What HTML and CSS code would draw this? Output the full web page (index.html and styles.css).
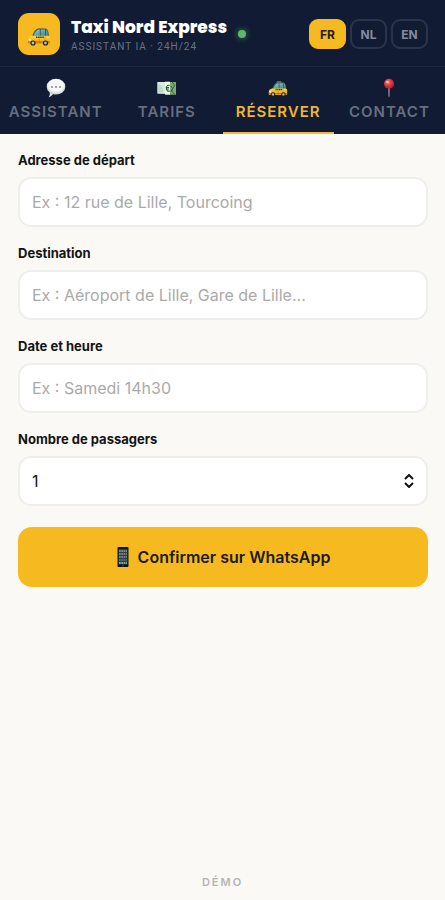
FILE: index.html
```html
<!DOCTYPE html>
<html lang="fr">
<head>
<meta charset="utf-8">
<meta name="viewport" content="width=device-width, initial-scale=1">
<title>Taxi Nord Express</title>
<link rel="stylesheet" href="styles.css">
</head>
<body>
<svg class="defs" aria-hidden="true">
  <defs>
    <linearGradient id="body-paint" x1="0" y1="0" x2="0" y2="1">
      <stop offset="0" stop-color="#ffd83d"/><stop offset="1" stop-color="#e79a12"/>
    </linearGradient>
    <linearGradient id="glass" x1="0" y1="0" x2="1" y2="1">
      <stop offset="0" stop-color="#8ccbd0"/><stop offset="1" stop-color="#3b7f8e"/>
    </linearGradient>
    <radialGradient id="bubble" cx=".5" cy=".4" r=".6">
      <stop offset=".6" stop-color="#fafafa"/><stop offset="1" stop-color="#c9cbd0"/>
    </radialGradient>
    <radialGradient id="pin" cx=".4" cy=".35" r=".65">
      <stop offset="0" stop-color="#ff8d8d"/><stop offset=".45" stop-color="#e23b42"/><stop offset="1" stop-color="#b51e2c"/>
    </radialGradient>
    <symbol id="taxi" viewBox="0 0 24 19">
      <path d="M10 2q.3-1.500 1.500-1.500h3.500Q16.300.5 16.500 2z" fill="#e9b02c"/>
      <path d="M5 9.500Q7.500 2 11 1.500h7.500q3 0 3.500 8z" fill="#355f68"/>
      <path d="M6.500 9Q8.500 3 12 2.500h.8V9zM13.800 2.500h4.200V9h-4.200zM19 2.700q1.800.5 2.200 6.300H19z" fill="url(#glass)"/>
      <path d="M1 12.500Q1.300 9.500 5 8.800h16.500q1.500.5 1.500 3v3.700q0 1.300-1.300 1.300H1.800Q.7 16.500.7 15z" fill="url(#body-paint)"/>
      <path d="M9 10.200h8" stroke="#3d3010" stroke-width="1.500" stroke-dasharray="1.500 .6"/>
      <path d="M12.500 11.500v4.500M18 9v6" stroke="#bb7b0c" stroke-width=".5"/>
      <path d="M1 15h22" stroke="#875d13" stroke-width=".8"/>
      <circle cx="2.800" cy="12.800" r="1.100" fill="#fff6bd"/>
      <circle cx="6" cy="16" r="2.600" fill="#202329"/><circle cx="6" cy="16" r="1.400" fill="#b4bbc4"/>
      <circle cx="18.500" cy="16" r="2.600" fill="#202329"/><circle cx="18.500" cy="16" r="1.400" fill="#b4bbc4"/>
    </symbol>
  </defs>
</svg>
<div class="app">
  <header class="header">
    <div class="logo"><svg class="logo-icon" aria-hidden="true"><use href="#taxi"/></svg></div>
    <div class="brand">
      <h1 class="brand-name">Taxi Nord Express</h1>
      <p class="brand-sub">ASSISTANT IA · 24H/24</p>
    </div>
    <span class="status"></span>
    <div class="langs">
      <button type="button" class="lang lang-active">FR</button>
      <button type="button" class="lang">NL</button>
      <button type="button" class="lang">EN</button>
    </div>
  </header>
  <nav class="tabs">
    <button type="button" class="tab">
      <svg class="tab-icon" viewBox="0 0 20 20" aria-hidden="true"><path d="M4 12.500l8 3q-3 1-4.800.5-1.700 2.500-4.700 3.500 1.700-2.500 1.500-7z" fill="#d4d6da"/><ellipse cx="10" cy="8.700" rx="9.300" ry="7.900" fill="url(#bubble)"/><g fill="#333"><circle cx="6" cy="9" r=".8"/><circle cx="10" cy="9" r=".8"/><circle cx="14" cy="9" r=".8"/></g></svg>
      <span>ASSISTANT</span>
    </button>
    <button type="button" class="tab">
      <svg class="tab-icon" viewBox="0 0 20 20" aria-hidden="true"><path d="M.5 4h18.500v12.500L.5 15.500z" fill="#a8d2ae"/><path d="M.5 4H8v11.500H.5z" fill="#d8eadb"/><path d="M1.500 6q4 1 5 8.500h-5z" fill="#b9d9c2"/><path d="M8 3.700h5v13H8z" fill="#f3f8e9"/><path d="M13 4h6v12.500h-6z" fill="#78ac70"/><path d="M15 4q4 3 1 6t2 6.500M14 8q3 2 0 6" fill="none" stroke="#315f39" stroke-width=".9"/><path d="M12.800 7.500q-3.300-1-3.300 2.700t3.300 2.700M8.700 9.500h3.300M8.700 11h3.300" fill="none" stroke="#236a40" stroke-width="1.100"/></svg>
      <span>TARIFS</span>
    </button>
    <button type="button" class="tab tab-active">
      <svg class="tab-icon" viewBox="0 0 20 20" aria-hidden="true"><use href="#taxi" x="0" y="3" width="20" height="16"/></svg>
      <span>RÉSERVER</span>
    </button>
    <button type="button" class="tab">
      <svg class="tab-icon" viewBox="0 0 20 20" aria-hidden="true"><path d="M9.400 9h1.200l-.2 9.500h-.8z" fill="#b7a6ab" stroke="#8a7078" stroke-width=".4"/><circle cx="10" cy="5.800" r="5" fill="url(#pin)"/><ellipse cx="8.300" cy="4" rx="1.500" ry="1" fill="#ffc0bd"/></svg>
      <span>CONTACT</span>
    </button>
  </nav>
  <main class="main">
    <form class="form">
      <div class="field">
        <label class="label" for="from">Adresse de départ</label>
        <input class="control" id="from" type="text" placeholder="Ex : 12 rue de Lille, Tourcoing">
      </div>
      <div class="field">
        <label class="label" for="to">Destination</label>
        <input class="control" id="to" type="text" placeholder="Ex : Aéroport de Lille, Gare de Lille...">
      </div>
      <div class="field">
        <label class="label" for="when">Date et heure</label>
        <input class="control" id="when" type="text" placeholder="Ex : Samedi 14h30">
      </div>
      <div class="field">
        <label class="label" for="people">Nombre de passagers</label>
        <div class="select-wrap">
          <select class="control" id="people"><option>1</option><option>2</option><option>3</option><option>4</option></select>
          <svg class="chevrons" viewBox="0 0 10 14" aria-hidden="true"><path d="M1 5l4-4 4 4M1 9l4 4 4-4"/></svg>
        </div>
      </div>
      <button type="button" class="submit">
        <svg class="phone" viewBox="0 0 12 20" aria-hidden="true"><rect x=".5" width="11" height="20" rx="1" fill="#111417"/><rect x="1.500" y="2" width="9" height="15.500" fill="#29434a"/><g stroke-width="1.700" stroke-dasharray="1.700 .6"><path d="M2 4h8" stroke="#7fae9c"/><path d="M2 7h8" stroke="#a88e78"/><path d="M2 10h8" stroke="#7897a8"/><path d="M2 13h8" stroke="#617c6c"/><path d="M2 16h8" stroke="#93c9bb"/></g><circle cx="6" cy="18.700" r=".6" fill="#69716f"/></svg>
        <span>Confirmer sur WhatsApp</span>
      </button>
    </form>
  </main>
  <footer class="footer">DÉMO</footer>
</div>
</body>
</html>
```
FILE: styles.css
```css
* { box-sizing: border-box; }
body {
  margin: 0;
  background: #faf9f5;
  color: #141414;
  font-family: Inter, "Liberation Sans", sans-serif;
}
button, input, select { font: inherit; }
.defs { position: absolute; width: 0; height: 0; }
.app { display: flex; flex-direction: column; min-height: 100vh; }

.header {
  display: flex;
  align-items: center;
  padding: 13px 17px 11px 18px;
  background: #111b33;
}
.logo {
  display: flex;
  flex: none;
  align-items: center;
  justify-content: center;
  width: 42px;
  height: 42px;
  border-radius: 11px;
  background: #f6ba20;
}
.logo-icon { width: 24px; height: 19px; margin-top: 5px; }
.brand { padding-top: 2px; margin-left: 11px; white-space: nowrap; }
.brand-name {
  margin: 0;
  color: #fff;
  font-family: Poppins, Inter, sans-serif;
  font-size: 17px;
  font-weight: 800;
  line-height: 24px;
}
.brand-sub {
  margin: 0;
  color: #6a7284;
  font-family: Roboto, Inter, sans-serif;
  font-size: 10px;
  letter-spacing: 1px;
  line-height: 16px;
}
.status {
  flex: none;
  width: 8px;
  height: 8px;
  margin-left: 11px;
  border-radius: 50%;
  background: #62b56d;
  box-shadow: 0 0 6px #3e8d4e;
}
.langs { display: flex; gap: 4px; margin-left: auto; }
.lang {
  width: 37px;
  height: 30px;
  padding: 0;
  border: 2px solid #2b344a;
  border-radius: 9px;
  background: transparent;
  color: #848b9c;
  font-size: 12px;
  font-weight: 700;
}
.lang-active { border-color: #f6ba20; background: #f6ba20; color: #222018; }

.tabs {
  display: grid;
  grid-template-columns: repeat(4, 1fr);
  border-top: 1px solid #1d2840;
  background: #111b33;
}
.tab {
  display: flex;
  flex-direction: column;
  align-items: center;
  gap: 3px;
  padding: 11px 0 9px;
  border: 0;
  border-bottom: 2px solid transparent;
  background: transparent;
  color: #666e80;
  font-size: 15px;
  font-weight: 600;
  letter-spacing: 1px;
  line-height: 22px;
}
.tab-active { border-bottom-color: #f2b83f; color: #f2b62d; }
.tab-icon { width: 20px; height: 20px; }

.main { flex: 1; padding: 18px 17px 18px 18px; }
.form { display: flex; flex-direction: column; gap: 18px; }
.field { display: flex; flex-direction: column; gap: 9px; }
.label { font-size: 13px; font-weight: 700; line-height: 16px; }
.control {
  width: 100%;
  height: 50px;
  padding: 0 12px;
  border: 2px solid #eeeeed;
  border-radius: 13px;
  background: #fff;
  color: #141414;
  font-size: 16px;
  appearance: none;
}
.control::placeholder { color: #aaa; opacity: 1; }
.select-wrap { display: grid; align-items: center; }
.select-wrap > * { grid-area: 1 / 1; }
.chevrons {
  justify-self: end;
  width: 10px;
  height: 14px;
  margin-right: 14px;
  fill: none;
  stroke: #111;
  stroke-width: 2;
  pointer-events: none;
}
.submit {
  display: flex;
  align-items: center;
  justify-content: center;
  gap: 8px;
  height: 60px;
  margin-top: 3px;
  border: 0;
  border-radius: 14px;
  background: #f6ba20;
  color: #1c1a14;
  font-size: 16px;
  font-weight: 600;
}
.phone { width: 14px; height: 20px; }
.footer {
  padding-bottom: 10px;
  color: #b5b5b3;
  font-size: 11px;
  font-weight: 600;
  letter-spacing: 2px;
  line-height: 16px;
  text-align: center;
}
```
